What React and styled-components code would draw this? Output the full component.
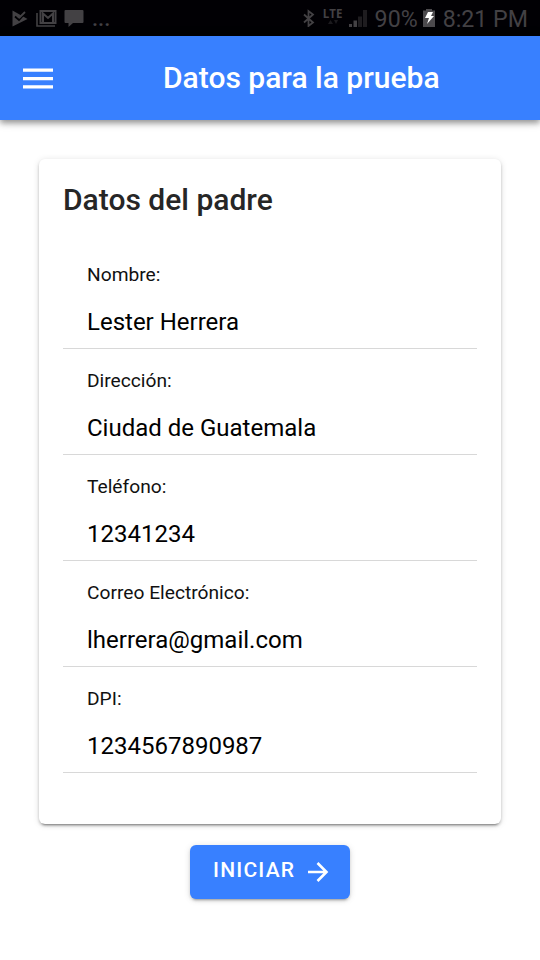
import styled, { createGlobalStyle } from "styled-components";

const GlobalStyle = createGlobalStyle`
  * {
    box-sizing: border-box;
  }

  body {
    margin: 0;
    background-color: #fff;
    font-family: Roboto, "Liberation Sans", sans-serif;
  }
`;

const Page = styled.div`
  width: 540px;
  height: 960px;
  display: flex;
  flex-direction: column;
  overflow: hidden;
`;

const StatusBar = styled.div`
  height: 36px;
  padding: 0 12px 0 11px;
  display: flex;
  justify-content: space-between;
  background-color: #010004;
  color: #434144;
`;

const StatusGroup = styled.div`
  display: flex;
  align-items: center;
`;

const StatusIcon = styled.svg`
  display: block;
  flex-shrink: 0;
  margin-left: ${(props) => props.$gap || 0}px;
`;

const Dots = styled.span`
  margin-left: 8px;
  padding-top: 2px;
  font-size: 22px;
  font-weight: 500;
  line-height: 34px;
`;

const Network = styled.div`
  width: 22px;
  height: 18px;
  margin-left: 6px;
  display: flex;
  flex-direction: column;
  align-items: center;
`;

const NetworkName = styled.span`
  font-family: "Open Sans", sans-serif;
  font-size: 11.5px;
  font-weight: 700;
  line-height: 10px;
`;

const StatusText = styled.span`
  margin-left: ${(props) => props.$gap}px;
  padding-top: 2px;
  font-size: 23.2px;
  line-height: 36px;
  white-space: nowrap;
`;

const Toolbar = styled.header`
  height: 84px;
  padding: 0 23px;
  display: grid;
  grid-template-columns: 30px 1fr;
  align-items: center;
  background-color: #3880ff;
  color: #fff;
  box-shadow: 0 3px 6px rgba(0, 0, 0, 0.38), 0 1px 12px rgba(0, 0, 0, 0.12);
`;

const MenuButton = styled.button`
  height: 30px;
  padding: 0;
  background-color: transparent;
  color: inherit;
  border: none;
`;

const ToolbarTitle = styled.h1`
  margin: 0;
  padding-left: 110px;
  font-size: 30px;
  font-weight: 500;
  line-height: 36px;
  white-space: nowrap;
`;

const Content = styled.main`
  flex: 1;
  padding: 39px 39px 0;
  display: flex;
  flex-direction: column;
  align-items: center;
`;

const Card = styled.section`
  width: 462px;
  height: 665px;
  padding: 23px 24px 0;
  border-radius: 6px;
  box-shadow: 0 4px 2px -3px rgba(0, 0, 0, 0.3), 0 2px 3px rgba(0, 0, 0, 0.2),
    0 1px 7px rgba(0, 0, 0, 0.12);
`;

const CardTitle = styled.h2`
  margin: 0 0 25px;
  color: #262626;
  font-size: 30px;
  font-weight: 500;
  line-height: 36px;
`;

const Item = styled.div`
  height: 106px;
  padding: 20px 24px 0;
  border-bottom: 1px solid #d8d8d8;
  color: #000;
`;

const ItemLabel = styled.div`
  margin-bottom: 20px;
  color: #111;
  font-size: 19.2px;
  line-height: 24px;
`;

const ItemValue = styled.div`
  font-size: 24px;
  line-height: 30px;
`;

const StartButton = styled.button`
  width: 160px;
  height: 54px;
  margin-top: 21px;
  padding: 0 21px 4px 23px;
  display: flex;
  align-items: center;
  justify-content: space-between;
  background-color: #3880ff;
  color: #fff;
  border: none;
  border-radius: 6px;
  box-shadow: 0 4px 2px -3px rgba(0, 0, 0, 0.2), 0 2px 3px rgba(0, 0, 0, 0.14),
    0 1px 7px rgba(0, 0, 0, 0.12);
  font-family: inherit;
  font-size: 21px;
  font-weight: 500;
  letter-spacing: 1.2px;
`;

const ArrowIcon = styled.svg`
  margin-top: 3px;
`;

const campos = [
  { label: "Nombre:", value: "Lester Herrera" },
  { label: "Dirección:", value: "Ciudad de Guatemala" },
  { label: "Teléfono:", value: "12341234" },
  { label: "Correo Electrónico:", value: "lherrera@gmail.com" },
  { label: "DPI:", value: "1234567890987" },
];

function Status() {
  return (
    <StatusBar>
      <StatusGroup>
        <StatusIcon width="17" height="18" viewBox="0 0 17 18">
          <path d="M1.5 1.500 16.500 10 1.500 17.500z" fill="currentColor" />
          <path d="m4 7.500 4 3.500 6-6.500" fill="none" stroke="#010004" strokeWidth="1.800" />
          <path d="m6.500 7 2 1.500L14 3" fill="none" stroke="currentColor" strokeWidth="1.800" />
        </StatusIcon>
        <StatusIcon $gap={8} width="21" height="18" viewBox="0 0 21 18">
          <path d="M1 4v13h18" fill="none" stroke="currentColor" strokeWidth="1.600" />
          <path
            d="M4.500 2h15v12h-15zM7 14V4.500l5 4.500 5-4.500V14"
            fill="none"
            stroke="currentColor"
            strokeWidth="2"
          />
        </StatusIcon>
        <StatusIcon $gap={7} width="20" height="18" viewBox="0 0 20 18">
          <path d="M1.500 1h17q1 0 1 1v11q0 1-1 1H9l-4.500 4v-4h-3q-1 0-1-1V2q0-1 1-1z" fill="currentColor" />
        </StatusIcon>
        <Dots>...</Dots>
      </StatusGroup>
      <StatusGroup>
        <StatusIcon width="14" height="18" viewBox="0 0 14 18">
          <path
            d="m2 5.500 9 8-4.500 3.500V2L11 5.500l-9 8"
            fill="none"
            stroke="currentColor"
            strokeWidth="1.800"
          />
        </StatusIcon>
        <Network>
          <NetworkName>LTE</NetworkName>
          <svg width="10" height="6" viewBox="0 0 10 6" opacity="0.4">
            <path d="M0 5 2.500 1 5 5zM6 1h4L8 5z" fill="currentColor" />
          </svg>
        </Network>
        <StatusIcon $gap={5} width="18" height="18" viewBox="0 0 18 18">
          <path d="M0 15h3v3H0zM4.500 11.500H8V18H4.500z" fill="currentColor" />
          <path d="M9 7.500h4V18H9zM14 1h4v17h-4z" fill="#1e1c1f" />
        </StatusIcon>
        <StatusText $gap={8}>90%</StatusText>
        <StatusIcon $gap={5} width="12" height="18" viewBox="0 0 12 18">
          <path d="M0 1.500h3V0h6v1.500h3V18H0z" fill="#4c4a4d" />
          <path d="M5 3h5L8 7h3l-7 8 2-6H2z" fill="#fff" />
        </StatusIcon>
        <StatusText $gap={8}>8:21 PM</StatusText>
      </StatusGroup>
    </StatusBar>
  );
}

function App() {
  return (
    <>
      <GlobalStyle />
      <Page>
        <Status />
        <Toolbar>
          <MenuButton aria-label="Menú">
            <svg width="30" height="30" viewBox="0 0 30 30">
              <path d="M0 5.500h30v3.300H0zM0 14h30v3.300H0zM0 22.300h30v3.300H0z" fill="currentColor" />
            </svg>
          </MenuButton>
          <ToolbarTitle>Datos para la prueba</ToolbarTitle>
        </Toolbar>
        <Content>
          <Card>
            <CardTitle>Datos del padre</CardTitle>
            {campos.map((campo) => (
              <Item key={campo.label}>
                <ItemLabel>{campo.label}</ItemLabel>
                <ItemValue>{campo.value}</ItemValue>
              </Item>
            ))}
          </Card>
          <StartButton>
            INICIAR
            <ArrowIcon width="22" height="20" viewBox="0 0 22 20">
              <path d="M1 10h18M10.500 1l9 9-9 9" fill="none" stroke="currentColor" strokeWidth="2.600" />
            </ArrowIcon>
          </StartButton>
        </Content>
      </Page>
    </>
  );
}

export default App;
